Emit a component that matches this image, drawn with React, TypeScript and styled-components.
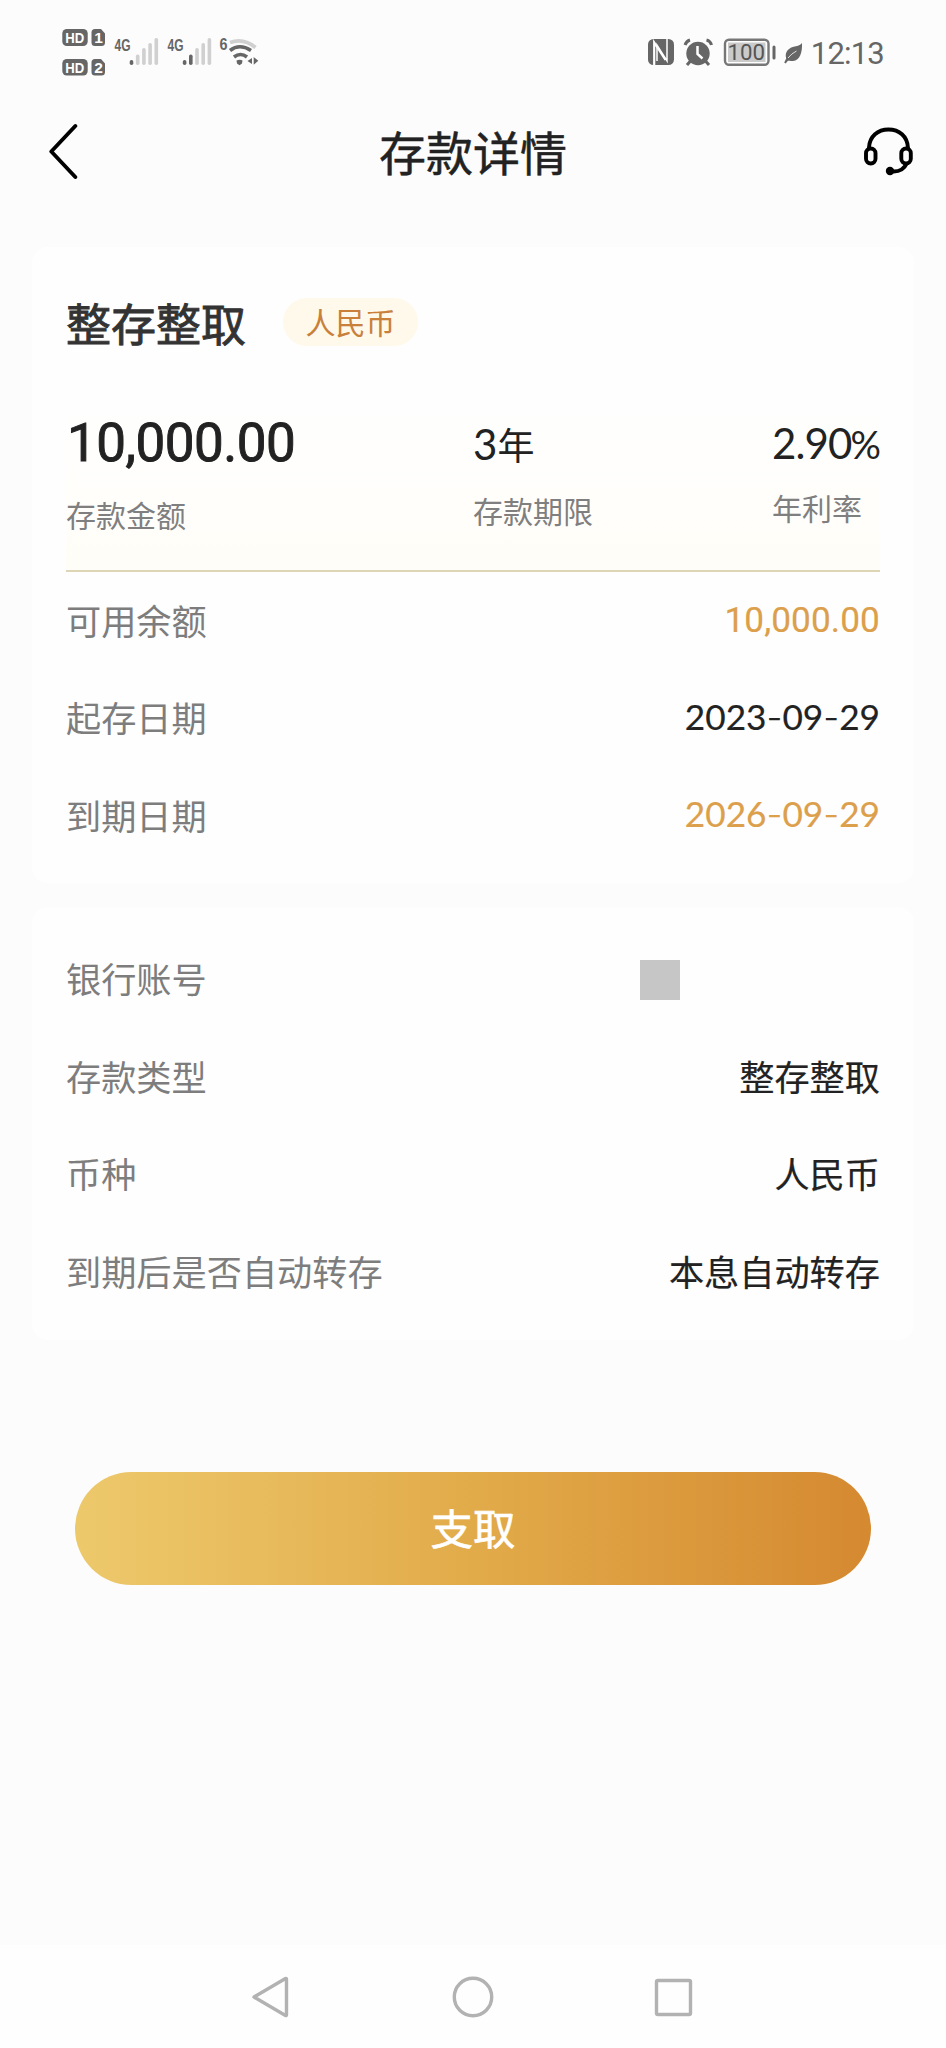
import React from "react";
import styled, { createGlobalStyle } from "styled-components";

const GlobalStyle = createGlobalStyle`
  * { box-sizing: border-box; }
  body { margin: 0; background: #fcfcfc; }
`;

const cjk = `"Noto Sans CJK SC", sans-serif`;
const digits = `Lato, "Noto Sans CJK SC", sans-serif`;
const amountFont = `Roboto, "Noto Sans CJK SC", sans-serif`;

const Screen = styled.div`
  width: 946px;
  height: 2048px;
  display: flex;
  flex-direction: column;
  background: #fcfcfc;
  color: #222;
  font-family: ${cjk};
  white-space: nowrap;
`;

const StatusBar = styled.header`
  height: 103px;
  padding: 27px 62px 0;
  display: flex;
  justify-content: space-between;
  align-items: flex-start;
`;

const StatusGroup = styled.div`
  display: flex;
  align-items: flex-start;
`;

const Clock = styled.span`
  margin: 9px 0 0 7px;
  font: 400 31px/36px Roboto, sans-serif;
  letter-spacing: -0.8px;
  color: #666;
`;

const NavBar = styled.nav`
  height: 97px;
  margin-bottom: 47px;
  padding: 0 33px 0 49px;
  display: grid;
  grid-template-columns: 49px 1fr 49px;
  align-items: center;
`;

const PageTitle = styled.h1`
  margin: 0;
  padding: 0 16px 1px 0;
  text-align: center;
  font-size: 47px;
  line-height: 60px;
  font-weight: 400;
  -webkit-text-stroke: 0.5px #222;
`;

const Card = styled.section<{ $height: number; $top: number }>`
  height: ${(p) => p.$height}px;
  margin: 0 32px 24px;
  padding: ${(p) => p.$top}px 34px 0;
  border-radius: 16px;
  background: #fefefe;
`;

const ProductRow = styled.div`
  height: 148px;
  padding-top: 47px;
  display: flex;
  align-items: flex-start;
  gap: 37px;
`;

const ProductName = styled.h2`
  margin: 0;
  font-size: 45px;
  line-height: 58px;
  font-weight: 400;
  color: #333;
  -webkit-text-stroke: 0.9px #333;
`;

const CurrencyTag = styled.span`
  width: 135px;
  height: 48px;
  margin-top: 4px;
  border-radius: 24px;
  background: #fff9eb;
  color: #c9803a;
  font-size: 30px;
  line-height: 46px;
  text-align: center;
`;

const Summary = styled.div`
  height: 177px;
  display: grid;
  grid-template-columns: 407px 299px 108px;
  background: linear-gradient(#fefefe, #fffefb 60%, #fffdf7);
  border-bottom: 2px solid #ded5b6;
`;

const Metric = styled.div<{ $top: number }>`
  padding-top: ${(p) => p.$top}px;
  display: flex;
  flex-direction: column;
`;

const Principal = styled.span`
  padding-left: 1px;
  font: 400 53px/60px ${amountFont};
  letter-spacing: -0.5px;
  -webkit-text-stroke: 0.9px #222;
`;

const MetricValue = styled.span`
  height: 51px;
  font: 400 42px/50px ${digits};
  letter-spacing: -0.9px;
`;

const Unit = styled.span`
  margin-left: 1px;
  font: 400 37px/50px ${cjk};
`;

const Percent = styled.span`
  margin-left: -1px;
  font-size: 38px;
`;

const MetricLabel = styled.span<{ $gap: number }>`
  margin-top: ${(p) => p.$gap}px;
  font-size: 30px;
  line-height: 40px;
  color: #7f7f7f;
`;

const DetailRow = styled.div<{ $height: number }>`
  height: ${(p) => p.$height}px;
  display: flex;
  justify-content: space-between;
  align-items: center;
`;

const Label = styled.span`
  font-size: 35.2px;
  line-height: 48px;
  padding-bottom: 4px;
  color: #7d7d7d;
`;

const Value = styled.span<{ $gold?: boolean; $font?: string; $spacing?: number; $lift?: number }>`
  font-family: ${(p) => p.$font ?? cjk};
  font-size: 35.2px;
  line-height: 48px;
  padding-bottom: ${(p) => p.$lift ?? 4}px;
  letter-spacing: ${(p) => p.$spacing ?? 0}px;
  color: ${(p) => (p.$gold ? "#dc9f4c" : "#222")};
  -webkit-text-stroke: 0.2px ${(p) => (p.$gold ? "#dc9f4c" : "#222")};
`;

const Dash = styled.span`
  font-family: Inter, sans-serif;
  font-weight: 300;
  -webkit-text-stroke: 0;
`;

const MaskedAccount = styled.span`
  width: 40px;
  height: 40px;
  margin: 0 200px 0 0;
  background: #c6c6c6;
`;

const WithdrawButton = styled.button`
  width: 796px;
  height: 113px;
  margin: 108px auto 0;
  padding: 0 0 4px;
  border: 0;
  border-radius: 57px;
  background: linear-gradient(90deg, #edc96c, #e2ab4a 50%, #d58930);
  color: #fff;
  font: 400 42.5px/56px ${cjk};
  -webkit-text-stroke: 0.6px #fff;
`;

const SystemNav = styled.footer`
  height: 103px;
  margin-top: auto;
  display: flex;
  justify-content: center;
  background: #fefefe;
`;

const IconLabel = styled.text`
  font-family: "Liberation Sans", sans-serif;
  font-weight: 700;
`;

const BatteryLabel = styled.text`
  font-family: Roboto, sans-serif;
  font-weight: 400;
`;

const bars = (x: number, active: number) =>
  [5, 10.5, 17, 22, 27].map((h, i) => (
    <rect key={i} x={x + i * 6.2} y={38 - h} width="3.6" height={h} rx="1.7" fill={i < active ? "#666" : "#d0d0d0"} />
  ));

const NetworkIcons = () => (
  <svg width="200" height="52" viewBox="0 0 200 52" fill="#666">
    <rect x="0.3" y="2" width="25.4" height="17" rx="4.5" />
    <path d="M33 2h6l4 4.5v9a3.5 3.5 0 0 1-3.5 3.5h-6.5a3.5 3.5 0 0 1-3.5-3.5v-10a3.5 3.5 0 0 1 3.5-3.5z" />
    <rect x="0.3" y="32" width="25.4" height="16.5" rx="4.5" />
    <path d="M33 32h6l4 4.5v8.5a3.5 3.5 0 0 1-3.5 3.5h-6.5a3.5 3.5 0 0 1-3.5-3.5v-9.5a3.5 3.5 0 0 1 3.5-3.5z" />
    <g fill="#fff" fontSize="15.5">
      <IconLabel x="3.2" y="16" textLength="19" lengthAdjust="spacingAndGlyphs">HD</IconLabel>
      <IconLabel x="32.2" y="16">1</IconLabel>
      <IconLabel x="3.2" y="46" textLength="19" lengthAdjust="spacingAndGlyphs">HD</IconLabel>
      <IconLabel x="32.2" y="46">2</IconLabel>
    </g>
    <g fontSize="16">
      <IconLabel x="52.5" y="23.5" textLength="16" lengthAdjust="spacingAndGlyphs">4G</IconLabel>
      <IconLabel x="105.5" y="23.5" textLength="16" lengthAdjust="spacingAndGlyphs">4G</IconLabel>
      <IconLabel x="157.5" y="22.5" textLength="8" lengthAdjust="spacingAndGlyphs">6</IconLabel>
    </g>
    {bars(67.7, 1)}
    {bars(120.8, 2)}
    <g fill="none" strokeWidth="3.6">
      <path d="M168 15.5q13.5-5 25.5 5" stroke="#d0d0d0" />
      <path d="M168 23.5q9.5-7.5 21 0" stroke="#666" />
      <path d="M172 30q6.5-5 13 0" stroke="#666" />
    </g>
    <path d="M174.5 33.5q3.5-1.5 6 0l-.5 3-2.5 1.8-2.5-1.8z" />
    <path d="M190 31v6l-4.5-3zM191.7 30l4.6 3.8-4.6 4z" />
  </svg>
);

const DeviceIcons = () => (
  <svg width="156" height="52" viewBox="0 0 156 52" fill="#666">
    <rect x="0" y="12" width="26" height="26" rx="5.5" />
    <g fill="none" stroke="#fff" strokeWidth="2.2">
      <path d="M6.2 38V15.5L17.5 33" />
      <path d="M19 12v22L9 18v16" strokeWidth="1.5" />
    </g>
    <circle cx="50" cy="26.5" r="11.7" />
    <path d="M42.5 34l-3.5 4M57.5 34l3.5 4" stroke="#666" strokeWidth="3" />
    <path d="M37 18q1.5-4 5-5M58.5 13q4 1 5 5" fill="none" stroke="#666" strokeWidth="3" />
    <path d="M49.5 19v8l5 4.5" fill="none" stroke="#fff" strokeWidth="2.5" />
    <rect x="77" y="12.7" width="43.5" height="25" rx="4" fill="#fff" stroke="#777" strokeWidth="2.4" />
    <rect x="80" y="15.5" width="37.5" height="19.5" fill="#cacaca" />
    <rect x="124.5" y="18.5" width="3" height="14" rx="1.5" />
    <BatteryLabel x="79.5" y="33" fontSize="22" textLength="37.5" lengthAdjust="spacingAndGlyphs" fill="#555">100</BatteryLabel>
    <path d="M154 16c.5 9-2 17.5-9 18-3 .3-4-.5-5.3 0l-2 2.5-1.5-1 2-4c-2-7 3-11 8.5-12 3.5-.5 6-1.5 7.3-3.5z" />
    <path d="M140 31q3.5-4.5 8.5-7" fill="none" stroke="#fcfcfc" strokeWidth="0.8" />
  </svg>
);

const BackIcon = () => (
  <svg width="49" height="58" viewBox="0 0 49 58" fill="none" stroke="#000" strokeWidth="3.9" strokeLinecap="round" strokeLinejoin="round">
    <path d="M26.3 3L2.3 28.5l24 25.5" />
  </svg>
);

const HeadsetIcon = () => (
  <svg width="49" height="50" viewBox="0 0 49 50" fill="none" stroke="#000" strokeWidth="3.9">
    <path d="M4.9 21C5.5 9 14 2.5 24.5 2.5S43.5 9 44 21" />
    <rect x="2" y="21.5" width="9.5" height="15" rx="4.7" />
    <rect x="37.3" y="21.5" width="9.5" height="15" rx="4.7" />
    <path d="M43 36c-2.5 5.5-8 9-15 8.5" />
    <circle cx="26" cy="44" r="4.2" fill="#000" stroke="none" />
  </svg>
);

const SystemIcons = () => (
  <svg width="446" height="103" viewBox="250 1945 446 103" fill="none" stroke="#b2b2b2" strokeWidth="3.4" strokeLinejoin="round">
    <path d="M254 1997l31.5-18.5q1-.5 1 1v35q0 1.5-1 1z" />
    <circle cx="473" cy="1997" r="18.7" />
    <rect x="656.5" y="1980.5" width="34" height="34" rx="1.5" />
  </svg>
);

const DateText = ({ parts }: { parts: string[] }) => (
  <>
    {parts.map((part, i) => (
      <React.Fragment key={i}>
        {i > 0 && <Dash>-</Dash>}
        {part}
      </React.Fragment>
    ))}
  </>
);

export default function App() {
  return (
    <Screen>
      <GlobalStyle />
      <StatusBar>
        <NetworkIcons />
        <StatusGroup>
          <DeviceIcons />
          <Clock>12:13</Clock>
        </StatusGroup>
      </StatusBar>
      <NavBar>
        <BackIcon />
        <PageTitle>存款详情</PageTitle>
        <HeadsetIcon />
      </NavBar>
      <Card $height={636} $top={0}>
        <ProductRow>
          <ProductName>整存整取</ProductName>
          <CurrencyTag>人民币</CurrencyTag>
        </ProductRow>
        <Summary>
          <Metric $top={18}>
            <Principal>10,000.00</Principal>
            <MetricLabel $gap={21}>存款金额</MetricLabel>
          </Metric>
          <Metric $top={24}>
            <MetricValue>3<Unit>年</Unit></MetricValue>
            <MetricLabel $gap={20}>存款期限</MetricLabel>
          </Metric>
          <Metric $top={23}>
            <MetricValue>2.90<Percent>%</Percent></MetricValue>
            <MetricLabel $gap={18}>年利率</MetricLabel>
          </Metric>
        </Summary>
        <DetailRow $height={100}>
          <Label>可用余额</Label>
          <Value $gold $font={amountFont} $spacing={0.1}>10,000.00</Value>
        </DetailRow>
        <DetailRow $height={94}>
          <Label>起存日期</Label>
          <Value $font={digits} $lift={6}><DateText parts={["2023", "09", "29"]} /></Value>
        </DetailRow>
        <DetailRow $height={101}>
          <Label>到期日期</Label>
          <Value $gold $font={digits} $lift={6}><DateText parts={["2026", "09", "29"]} /></Value>
        </DetailRow>
      </Card>
      <Card $height={433} $top={24}>
        <DetailRow $height={98}>
          <Label>银行账号</Label>
          <MaskedAccount />
        </DetailRow>
        <DetailRow $height={98}>
          <Label>存款类型</Label>
          <Value>整存整取</Value>
        </DetailRow>
        <DetailRow $height={95}>
          <Label>币种</Label>
          <Value>人民币</Value>
        </DetailRow>
        <DetailRow $height={101}>
          <Label>到期后是否自动转存</Label>
          <Value>本息自动转存</Value>
        </DetailRow>
      </Card>
      <WithdrawButton>支取</WithdrawButton>
      <SystemNav>
        <SystemIcons />
      </SystemNav>
    </Screen>
  );
}
